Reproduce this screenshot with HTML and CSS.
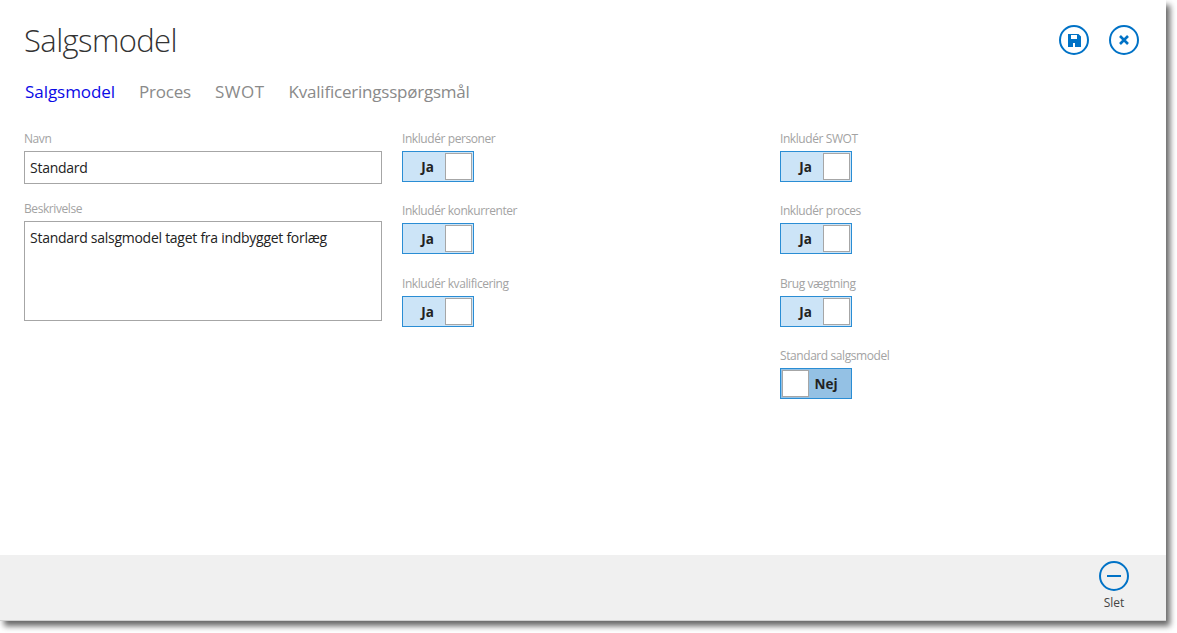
FILE: index.html
```html
<!DOCTYPE html>
<html lang="da">
<head>
  <meta charset="UTF-8">
  <title>Salgsmodel</title>
  <link rel="stylesheet" href="styles.css">
</head>
<body>
  <div class="window">
    <header class="top">
      <h1>Salgsmodel</h1>
      <div class="actions">
        <a class="round-btn" href="#" title="Gem">
          <svg viewBox="0 0 13 13" width="13" height="13"><path fill="#0072c6" fill-rule="evenodd" d="M0 0H10.500L13 2.500V13H0ZM3 1V5H9V1ZM5 9V13H7V9Z"/></svg>
        </a>
        <a class="round-btn" href="#" title="Luk">
          <svg viewBox="0 0 10 10" width="10" height="10"><path stroke="#0072c6" stroke-width="2.6" d="M1 1L9 9M9 1L1 9"/></svg>
        </a>
      </div>
    </header>

    <nav class="tabs">
      <a class="tab active" href="#">Salgsmodel</a>
      <a class="tab" href="#">Proces</a>
      <a class="tab tab-caps" href="#">SWOT</a>
      <a class="tab" href="#">Kvalificeringsspørgsmål</a>
    </nav>

    <main class="form">
      <div class="col">
        <div class="field">
          <label>Navn</label>
          <div class="box">Standard</div>
        </div>
        <div class="field">
          <label>Beskrivelse</label>
          <div class="box box-area">Standard salsgmodel taget fra indbygget forlæg</div>
        </div>
      </div>

      <div class="col">
        <div class="field">
          <label>Inkludér personer</label>
          <div class="toggle on"><span class="toggle-text">Ja</span><span class="knob"></span></div>
        </div>
        <div class="field">
          <label>Inkludér konkurrenter</label>
          <div class="toggle on"><span class="toggle-text">Ja</span><span class="knob"></span></div>
        </div>
        <div class="field">
          <label>Inkludér kvalificering</label>
          <div class="toggle on"><span class="toggle-text">Ja</span><span class="knob"></span></div>
        </div>
      </div>

      <div class="col">
        <div class="field">
          <label>Inkludér SWOT</label>
          <div class="toggle on"><span class="toggle-text">Ja</span><span class="knob"></span></div>
        </div>
        <div class="field">
          <label>Inkludér proces</label>
          <div class="toggle on"><span class="toggle-text">Ja</span><span class="knob"></span></div>
        </div>
        <div class="field">
          <label>Brug vægtning</label>
          <div class="toggle on"><span class="toggle-text">Ja</span><span class="knob"></span></div>
        </div>
        <div class="field">
          <label>Standard salgsmodel</label>
          <div class="toggle off"><span class="knob"></span><span class="toggle-text">Nej</span></div>
        </div>
      </div>
    </main>

    <footer class="bottom">
      <a class="foot-btn" href="#">
        <span class="round-btn">
          <svg viewBox="0 0 14 2" width="14" height="2"><rect width="14" height="2" fill="#0072c6"/></svg>
        </span>
        <span class="foot-label">Slet</span>
      </a>
    </footer>
  </div>
</body>
</html>
```

FILE: styles.css
```css
* {
  margin: 0;
  padding: 0;
  box-sizing: border-box;
}

html, body {
  width: 1177px;
  height: 633px;
  overflow: hidden;
  background: #fff;
}

body {
  font-family: "Open Sans", "Noto Sans", sans-serif;
  color: #222;
}

a {
  text-decoration: none;
  color: inherit;
}

.window {
  width: 1166px;
  height: 621px;
  display: flex;
  flex-direction: column;
  background: #fff;
  box-shadow: 4px 5px 6px rgba(0,0,0,0.6);
}

.top {
  display: flex;
  justify-content: space-between;
  padding: 19px 27px 0 24px;
  height: 72px;
}

h1 {
  font-size: 31px;
  font-weight: 300;
  line-height: 42px;
  color: #333;
  letter-spacing: -0.6px;
}

.actions {
  display: flex;
  gap: 20px;
  padding: 6px 0 0;
}

.round-btn {
  width: 30px;
  height: 30px;
  border: 2px solid #0072c6;
  border-radius: 50%;
  display: flex;
  align-items: center;
  justify-content: center;
  background: #fff;
}

.bottom .round-btn {
  background: transparent;
}

.tabs {
  display: flex;
  gap: 24px;
  padding-left: 25px;
  height: 45px;
}

.tab {
  font-size: 17px;
  line-height: 40px;
  color: #8a8a8a;
  letter-spacing: -0.22px;
}

.tab.active {
  color: #0a0ae6;
  font-weight: 500;
  letter-spacing: -0.05px;
}

.tab-caps {
  letter-spacing: 0.5px;
}

.form {
  flex: 1;
  display: grid;
  grid-template-columns: repeat(3, 358px);
  gap: 20px;
  padding: 0 0 0 24px;
}

.col {
  display: flex;
  flex-direction: column;
  padding-top: 12px;
}

.field {
  margin-bottom: 19.33px;
}

.col:first-child .field {
  margin-bottom: 15px;
}

label {
  display: block;
  font-size: 12px;
  line-height: 20px;
  margin-bottom: 2px;
  color: #a3a3a3;
  letter-spacing: -0.42px;
}

.box {
  height: 33px;
  border: 1px solid #a6a6a6;
  padding: 0 5px;
  font-size: 14px;
  line-height: 31px;
  color: #222;
  letter-spacing: -0.27px;
}

.box-area {
  height: 100px;
}

.toggle {
  width: 72px;
  height: 31px;
  border: 1px solid #2a8dd4;
  padding: 1px;
  display: flex;
  align-items: stretch;
}

.toggle.on {
  background: #cce4f7;
}

.toggle.off {
  background: #94c1e4;
}

.toggle-text {
  flex: 1;
  font-size: 13.5px;
  font-weight: 700;
  line-height: 29px;
  text-align: center;
  color: #222;
}

.toggle.on .toggle-text {
  padding-left: 6px;
}

.toggle.off .toggle-text {
  padding-right: 7px;
}

.knob {
  width: 27px;
  background: #fff;
  border: 1px solid #a6a6a6;
}

.bottom {
  height: 66px;
  background: #f0f0f0;
  border-bottom: 1px solid #d0d0d0;
  display: flex;
  justify-content: flex-end;
  padding: 6px 37px 0 0;
}

.foot-btn {
  display: flex;
  flex-direction: column;
  align-items: center;
}

.foot-label {
  font-size: 12px;
  line-height: 24px;
  color: #444;
}
```
